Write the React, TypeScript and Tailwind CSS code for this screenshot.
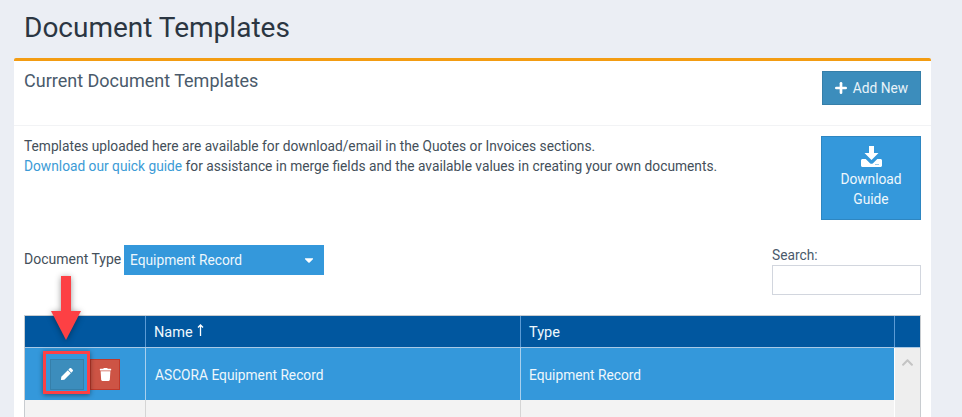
import { Plus } from "lucide-react";
import { FaPen, FaTrash, FaCaretDown, FaChevronUp } from "react-icons/fa";

function DownloadIcon() {
  return (
    <svg width="21" height="21" viewBox="0 0 21 21" fill="white">
      <path d="M8 0h5v7h4.5L10.5 14 3.5 7H8z" />
      <path d="M0 14.5C0 13.7.7 13 1.5 13h3.2l4.3 4.2c.8.8 2.2.8 3 0L16.3 13h3.2c.8 0 1.5.7 1.5 1.5v5c0 .8-.7 1.5-1.5 1.5h-18C.7 21 0 20.300 0 19.500z" />
      <rect x="14.500" y="18" width="1" height="1" fill="#3498db" />
      <rect x="16.500" y="18" width="1" height="1" fill="#3498db" />
    </svg>
  );
}

function SortArrow() {
  return (
    <svg width="7" height="12" viewBox="0 0 7 12" fill="none" stroke="white" strokeWidth="1.300" className="mb-[7px]">
      <path d="M3.500 12V1M1 3.500 3.500 1 6 3.500" />
    </svg>
  );
}

function PointerArrow() {
  return (
    <div className="absolute left-[51px] top-[276px] flex flex-col items-center drop-shadow-[0_1px_3px_rgba(0,0,0,0.4)]">
      <div className="w-[10px] h-[35px] bg-[#fd4044]" />
      <div className="w-0 h-0 border-l-[15px] border-r-[15px] border-t-[29px] border-l-transparent border-r-transparent border-t-[#fd4044]" />
    </div>
  );
}

export default function App() {
  return (
    <div className="relative w-[962px] h-[417px] overflow-hidden bg-[#ebeef4] font-['Roboto',sans-serif]">
      <h1 className="pl-[24px] pt-[10px] h-[58px] text-[28px] leading-[36px] text-[#2b3642]">
        Document Templates
      </h1>
      <div className="ml-[14px] w-[917px] h-[359px] bg-white border-t-[3px] border-[#f39c12] rounded-t-[2px]">
        <div className="flex justify-between h-[65px] pl-[10px] pr-[10px] border-b border-[#f2f3f5]">
          <h2 className="pt-[8px] text-[18px] leading-[24px] text-[#4a5a6b]">
            Current Document Templates
          </h2>
          <button className="mt-[10px] w-[99px] h-[34px] pr-[2px] flex items-center justify-center gap-[4px] bg-[#3c8dbc] border border-[#367fa9] text-[#e8f3f9] text-[13.75px]">
            <Plus size={16} strokeWidth={4} className="text-white" />
            Add New
          </button>
        </div>
        <div className="flex justify-between pl-[10px] pr-[10px] pt-[10px]">
          <p className="text-[13.75px] leading-[20px] text-[#444f5a]">
            Templates uploaded here are available for download/email in the
            Quotes or Invoices sections.
            <br />
            <a className="text-[#3c9bd6]">Download our quick guide</a> for
            assistance in merge fields and the available values in creating your
            own documents.
          </p>
          <button className="w-[100px] h-[84px] flex flex-col items-center pt-[9px] bg-[#3498db] border border-[#2e86c1] text-[#eef7fc] text-[13.75px] leading-[20px]">
            <DownloadIcon />
            <span className="mt-[2px]">Download</span>
            <span>Guide</span>
          </button>
        </div>
        <div className="flex justify-between pl-[10px] pr-[10px] mt-[25px] h-[70px]">
          <div className="flex items-start">
            <span className="w-[100px] pt-[4px] text-[14px] leading-[20px] whitespace-nowrap text-[#444f5a]">
              Document Type
            </span>
            <div className="w-[200px] h-[30px] pl-[6px] pr-[8px] flex items-center justify-between bg-[#3498db] text-[#eef7fc] text-[13.75px]">
              Equipment Record
              <FaCaretDown size={14} className="text-white" />
            </div>
          </div>
          <div className="pt-[1px]">
            <div className="text-[13.75px] leading-[19px] text-[#4a5a6b]">Search:</div>
            <input className="block w-[149px] h-[30px] bg-white border border-[#d2d6de]" />
          </div>
        </div>
        <div className="ml-[10px] w-[897px] border border-[#c8ccd0] border-b-0 text-[13.75px] text-[#eef7fc]">
          <div className="flex h-[31px] bg-[#01579f]">
            <div className="w-[121px] border-r border-[#5b9bd5]" />
            <div className="w-[375px] pl-[8px] pt-[3px] flex items-center gap-[4px] border-r border-[#5b9bd5] text-[14.5px]">
              Name
              <SortArrow />
            </div>
            <div className="w-[374px] pl-[8px] pt-[3px] flex items-center border-r border-[#5b9bd5] text-[14.5px]">
              Type
            </div>
          </div>
          <div className="flex h-[70px] border-t border-[#a9c9e6]">
            <div className="w-[869px]">
              <div className="flex h-[52px] bg-[#3498db]">
                <div className="w-[121px] pl-[25px] flex items-center gap-[6px] border-r border-[#a9d0ee]">
                  <button className="w-[34px] h-[31px] flex items-center justify-center bg-[#3c8dbc] border border-[#367fa9] text-white">
                    <FaPen size={12} />
                  </button>
                  <button className="w-[30px] h-[31px] flex items-center justify-center bg-[#cd5445] border border-[#c0392b] text-white">
                    <FaTrash size={13} />
                  </button>
                </div>
                <div className="w-[375px] pl-[9px] pt-[2px] flex items-center border-r border-[#a9d0ee]">
                  ASCORA Equipment Record
                </div>
                <div className="flex-1 pl-[8px] pt-[2px] flex items-center">
                  Equipment Record
                </div>
              </div>
              <div className="flex h-[18px] bg-[#f3f3f3]">
                <div className="w-[121px] border-r border-[#d5d5d5]" />
                <div className="w-[375px] border-r border-[#d5d5d5]" />
              </div>
            </div>
            <div className="w-[26px] pt-[8px] flex justify-center bg-[#eeeeee] border-l border-white text-[#c4c4c4]">
              <FaChevronUp size={13} />
            </div>
          </div>
        </div>
      </div>
      <PointerArrow />
      <div className="absolute left-[43px] top-[351px] w-[47px] h-[43px] border-[3px] border-[#fd4044] shadow-[0_1px_5px_rgba(0,0,0,0.45)]" />
    </div>
  );
}
